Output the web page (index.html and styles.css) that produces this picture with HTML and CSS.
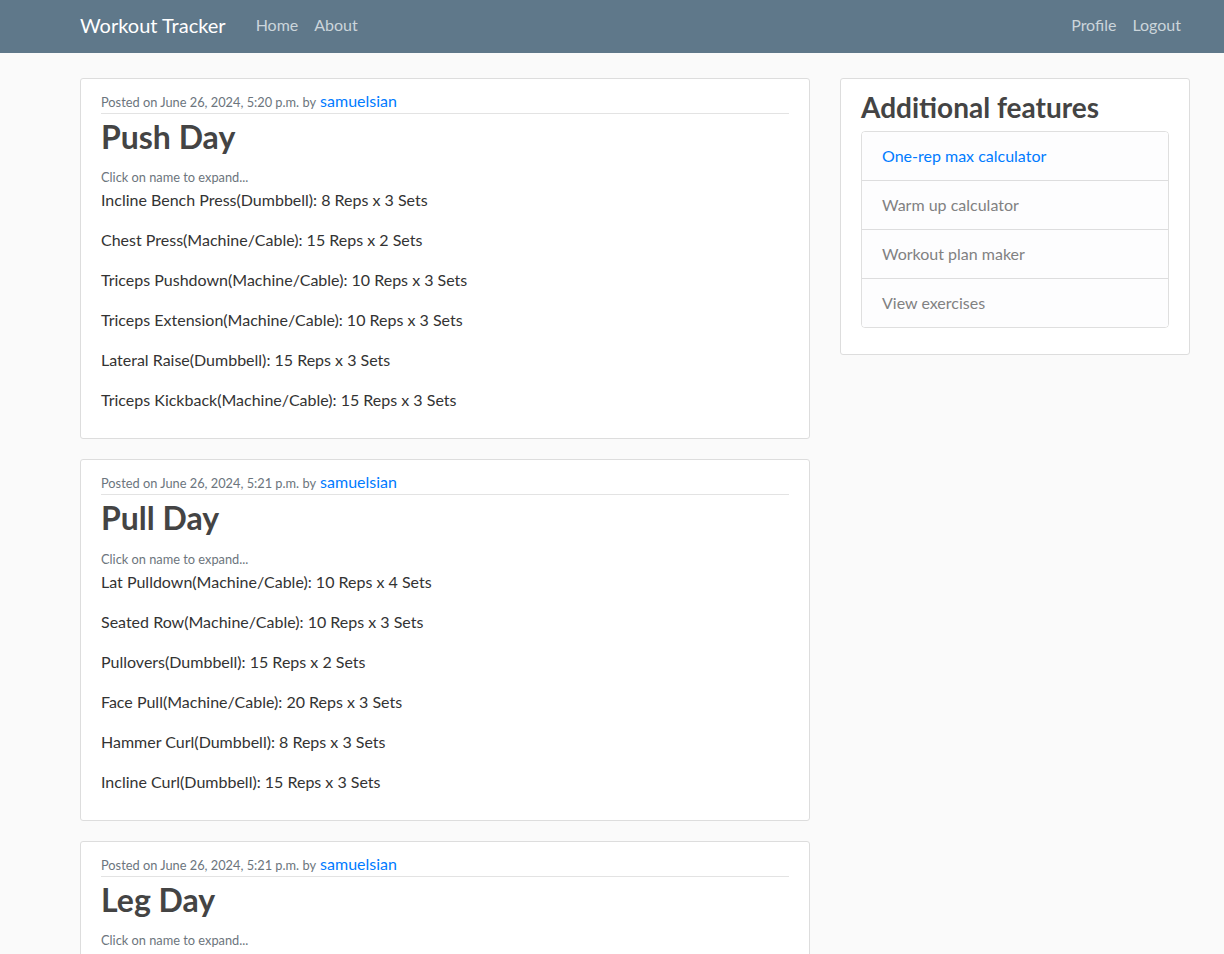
FILE: index.html
```html
<!DOCTYPE html>
<html lang="en">
<head>
<meta charset="utf-8">
<title>Workout Tracker</title>
<link rel="stylesheet" href="styles.css">
</head>
<body>
<header class="site-header">
  <nav class="navbar">
    <a class="brand" href="#">Workout Tracker</a>
    <div class="nav-left">
      <a class="nav-link" href="#">Home</a>
      <a class="nav-link" href="#">About</a>
    </div>
    <div class="nav-right">
      <a class="nav-link" href="#">Profile</a>
      <a class="nav-link" href="#">Logout</a>
    </div>
  </nav>
</header>
<main class="container">
  <div class="main-col">
    <article class="content-section">
      <div class="article-metadata"><small class="text-muted">Posted on June 26, 2024, 5:20 p.m. by</small> <a class="author" href="#">samuelsian</a></div>
      <h2 class="article-title">Push Day</h2>
      <div class="hint"><small class="text-muted">Click on name to expand...</small></div>
      <p>Incline Bench Press(Dumbbell): 8 Reps x 3 Sets</p>
      <p>Chest Press(Machine/Cable): 15 Reps x 2 Sets</p>
      <p>Triceps Pushdown(Machine/Cable): 10 Reps x 3 Sets</p>
      <p>Triceps Extension(Machine/Cable): 10 Reps x 3 Sets</p>
      <p>Lateral Raise(Dumbbell): 15 Reps x 3 Sets</p>
      <p>Triceps Kickback(Machine/Cable): 15 Reps x 3 Sets</p>
    </article>
    <article class="content-section">
      <div class="article-metadata"><small class="text-muted">Posted on June 26, 2024, 5:21 p.m. by</small> <a class="author" href="#">samuelsian</a></div>
      <h2 class="article-title">Pull Day</h2>
      <div class="hint"><small class="text-muted">Click on name to expand...</small></div>
      <p>Lat Pulldown(Machine/Cable): 10 Reps x 4 Sets</p>
      <p>Seated Row(Machine/Cable): 10 Reps x 3 Sets</p>
      <p>Pullovers(Dumbbell): 15 Reps x 2 Sets</p>
      <p>Face Pull(Machine/Cable): 20 Reps x 3 Sets</p>
      <p>Hammer Curl(Dumbbell): 8 Reps x 3 Sets</p>
      <p>Incline Curl(Dumbbell): 15 Reps x 3 Sets</p>
    </article>
    <article class="content-section">
      <div class="article-metadata"><small class="text-muted">Posted on June 26, 2024, 5:21 p.m. by</small> <a class="author" href="#">samuelsian</a></div>
      <h2 class="article-title">Leg Day</h2>
      <div class="hint"><small class="text-muted">Click on name to expand...</small></div>
    </article>
  </div>
  <aside class="side-col">
    <div class="content-section">
      <h3 class="side-title">Additional features</h3>
      <ul class="list-group">
        <li class="list-group-item"><a href="#">One-rep max calculator</a></li>
        <li class="list-group-item">Warm up calculator</li>
        <li class="list-group-item">Workout plan maker</li>
        <li class="list-group-item">View exercises</li>
      </ul>
    </div>
  </aside>
</main>
</body>
</html>
```
FILE: styles.css
```css
* { box-sizing: border-box; }
html, body { margin: 0; }
body {
  background: #fafafa;
  color: #333333;
  font-family: Lato, "Open Sans", sans-serif;
  font-size: 16px;
  line-height: 1.5;
}
a { text-decoration: none; color: #007bff; }

.site-header { background: #5f788a; height: 53px; }
.navbar {
  display: flex;
  align-items: center;
  height: 53px;
  padding: 0 35px 4px 80px;
}
.brand {
  color: #ffffff;
  font-size: 20px;
  line-height: 30px;
  margin-right: 22px;
}
.nav-left { display: flex; flex: 1; }
.nav-right { display: flex; }
.nav-link {
  color: #cbd5db;
  padding: 0 8px;
  font-size: 16px;
}

.container {
  display: flex;
  gap: 30px;
  padding: 25px 0 0 80px;
}
.main-col { width: 730px; flex: none; }
.side-col { width: 350px; flex: none; }

.content-section {
  background: #ffffff;
  padding: 10px 20px;
  border: 1px solid #dddddd;
  border-radius: 3px;
  margin-bottom: 20px;
}
.article-metadata {
  height: 25px;
  line-height: 23px;
  margin-bottom: 4px;
  border-bottom: 1px solid #e3e3e3;
}
.text-muted { color: #6c757d; }
small { font-size: 80%; }
.author { font-size: 16px; }
.article-title {
  color: #444444;
  font-size: 32px;
  font-weight: 700;
  line-height: 1.2;
  margin: 1px 0 9px;
}
.hint { height: 23px; line-height: 22px; }
p { margin: 0 0 16px; }

.side-title {
  color: #444444;
  font-size: 28px;
  font-weight: 700;
  line-height: 1.2;
  padding-top: 2px;
  margin: 0 0 6px;
}
.list-group {
  list-style: none;
  padding: 0;
  margin: 0 0 16px;
  border: 1px solid rgba(0,0,0,0.125);
  border-radius: 4px;
  overflow: hidden;
}
.list-group-item {
  background: #fdfdfe;
  color: #818182;
  padding: 12px 20px;
  border-top: 1px solid rgba(0,0,0,0.125);
}
.list-group-item:first-child { border-top: none; }
```
